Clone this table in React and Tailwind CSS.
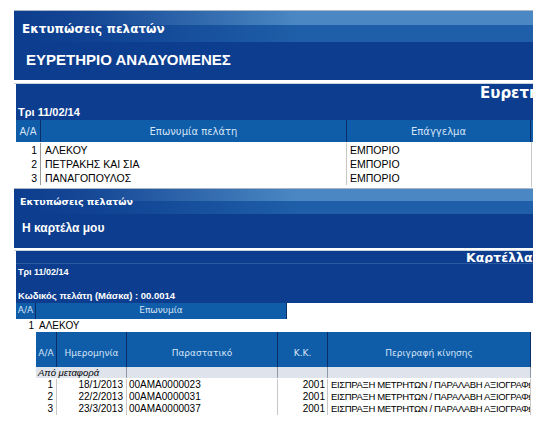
const bandBg =
  "bg-[linear-gradient(to_right,#0c3d8e_0%,rgba(12,61,142,0.85)_15%,rgba(12,61,142,0)_55%),linear-gradient(to_bottom,#4b88c3_0px,#4b88c3_var(--s1),#1f5ea8_var(--s1),#1f5ea8_var(--s2),#0c3d8e_var(--s2))]"

const hdrCell = "flex items-center justify-center text-[#d6e4f5] border-r border-[#0a2d68]"

const rows1 = [
  ["1", "ΑΛΕΚΟΥ", "ΕΜΠΟΡΙΟ"],
  ["2", "ΠΕΤΡΑΚΗΣ ΚΑΙ ΣΙΑ", "ΕΜΠΟΡΙΟ"],
  ["3", "ΠΑΝΑΓΟΠΟΥΛΟΣ", "ΕΜΠΟΡΙΟ"],
]

const moves = [
  ["1", "18/1/2013", "00AMA0000023", "2001"],
  ["2", "22/2/2013", "00AMA0000031", "2001"],
  ["3", "23/3/2013", "00AMA0000037", "2001"],
]

const desc = "ΕΙΣΠΡΑΞΗ ΜΕΤΡΗΤΩΝ / ΠΑΡΑΛΑΒΗ ΑΞΙΟΓΡΑΦΩΝ"

export default function App() {
  return (
    <div className="w-[555px] h-[445px] bg-white overflow-hidden pt-[10px] pl-[14px] font-['Liberation_Sans',Arial,sans-serif]">
      <div className="w-[519px] overflow-hidden flex flex-col">
        {/* panel 1 */}
        <div className="h-px w-[519px] bg-[#aab6c6]" />
        <div
          className={`h-[69px] w-[519px] overflow-hidden flex flex-col ${bandBg} [--s1:14px] [--s2:31px]`}
        >
          <div className="pl-[8px] pt-[11px] text-white font-bold text-[12px] leading-[15px] font-['DejaVu_Sans',sans-serif]">
            Εκτυπώσεις πελατών
          </div>
          <div className="pl-[12px] pt-[14px] text-white font-bold text-[15px] leading-[18px]">
            ΕΥΡΕΤΗΡΙΟ ΑΝΑΔΥΟΜΕΝΕΣ
          </div>
        </div>
        <div className="h-[4px] w-[519px] bg-white border-b border-[#c9d3df]" />
        <div className="ml-[2px] w-[517px] overflow-hidden flex flex-col">
          <div className="h-[36px] w-[517px] bg-[#0c3d8e] overflow-hidden flex flex-col">
            <div className="w-[517px] pl-[464px] whitespace-nowrap overflow-hidden text-white font-bold text-[15px] leading-[18px] font-['DejaVu_Sans',sans-serif]">
              Ευρετήριο
            </div>
            <div className="pl-[2px] pt-[4px] text-white font-bold text-[11px] leading-[13px]">
              Τρι 11/02/14
            </div>
          </div>
          <div className="h-[22px] bg-[#0f5ca9] grid grid-cols-[25px_306px_184px] text-[10px] font-['DejaVu_Sans',sans-serif]">
            <div className={hdrCell}>A/A</div>
            <div className={hdrCell}>Επωνυμία πελάτη</div>
            <div className={hdrCell}>Επάγγελμα</div>
          </div>
          <div className="pt-px pb-[2px] border-r border-[#c8c8c8] w-[516px] text-[10.5px] text-black">
            {rows1.map((r) => (
              <div key={r[0]} className="h-[14px] grid grid-cols-[25px_306px_184px] leading-[14px]">
                <div className="text-right pr-[3px] border-r border-[#9a9a9a]">{r[0]}</div>
                <div className="pl-[4px] border-r border-[#c8c8c8]">{r[1]}</div>
                <div className="pl-[3px]">{r[2]}</div>
              </div>
            ))}
          </div>
        </div>

        {/* panel 2 */}
        <div className="mt-px h-px w-[519px] bg-[#aab6c6]" />
        <div className={`h-[59px] w-[519px] overflow-hidden flex flex-col ${bandBg} [--s1:12px] [--s2:25px]`}>
          <div className="pl-[6px] pt-[7px] text-white font-bold text-[9.5px] leading-[12px] font-['DejaVu_Sans',sans-serif]">
            Εκτυπώσεις πελατών
          </div>
          <div className="pl-[8px] pt-[13px] text-white font-bold text-[12px] leading-[14px]">
            Η καρτέλα μου
          </div>
        </div>
        <div className="h-[3px] w-[519px] bg-white border-b border-[#c9d3df]" />
        <div className="ml-[2px] w-[517px] overflow-hidden flex flex-col">
          <div className="h-[52px] w-[517px] bg-[#0c3d8e] overflow-hidden flex flex-col">
            <div className="h-[13px] w-[517px] pl-[450px] whitespace-nowrap overflow-hidden text-white font-bold text-[12.5px] leading-[13px] font-['DejaVu_Sans',sans-serif] border-b border-[#2b5aa3]">
              Καρτέλλα κ
            </div>
            <div className="pl-[2px] pt-[2px] text-white font-bold text-[9px] leading-[12px]">
              Τρι 11/02/14
            </div>
            <div className="pl-[2px] pt-[12px] text-white font-bold text-[9.5px] leading-[12px]">
              Κωδικός πελάτη (Μάσκα) : 00.0014
            </div>
          </div>
          <div className="h-[16px] w-[271px] bg-[#0f5ca9] grid grid-cols-[20px_251px] text-[9px] font-['DejaVu_Sans',sans-serif]">
            <div className={hdrCell}>A/A</div>
            <div className={hdrCell}>Επωνυμία</div>
          </div>
          <div className="h-[13px] w-[271px] grid grid-cols-[20px_251px] text-[10px] leading-[13px]">
            <div className="text-right pr-[2px]">1</div>
            <div className="pl-[3px]">ΑΛΕΚΟΥ</div>
          </div>
          <div className="ml-[20px] w-[495px] flex flex-col">
            <div className="h-[35px] bg-[#0f5ca9] grid grid-cols-[21px_70px_151px_50px_203px] text-[9px] font-['DejaVu_Sans',sans-serif]">
              {["A/A", "Ημερομηνία", "Παραστατικό", "Κ.Κ.", "Περιγραφή κίνησης"].map((h) => (
                <div key={h} className={`${hdrCell} items-end pb-[7px]`}>{h}</div>
              ))}
            </div>
            <div className="h-[11px] bg-[#dfe4ec] grid grid-cols-[91px_151px_50px_203px] text-[9.5px] leading-[11px] italic">
              <div className="pl-[2px] border-r border-[#8e98a6]">Από μεταφορά</div>
              <div className="border-r border-[#8e98a6]" />
              <div className="border-r border-[#8e98a6]" />
              <div className="border-r border-[#8e98a6]" />
            </div>
            <div className="pt-px text-[10px] text-black">
              {moves.map((m) => (
                <div key={m[0]} className="h-[12px] leading-[12px] grid grid-cols-[21px_70px_151px_50px_203px]">
                  <div className="text-right pr-[3px] border-r border-[#c8c8c8]">{m[0]}</div>
                  <div className="text-right pr-[3px] border-r border-[#c8c8c8]">{m[1]}</div>
                  <div className="pl-[2px] border-r border-[#c8c8c8]">{m[2]}</div>
                  <div className="text-right pr-[2px] border-r border-[#c8c8c8]">{m[3]}</div>
                  <div className="pl-[3px] whitespace-nowrap overflow-hidden border-r border-[#c8c8c8] text-[9.5px] tracking-[-0.35px]">{desc}</div>
                </div>
              ))}
            </div>
          </div>
        </div>
      </div>
    </div>
  )
}
